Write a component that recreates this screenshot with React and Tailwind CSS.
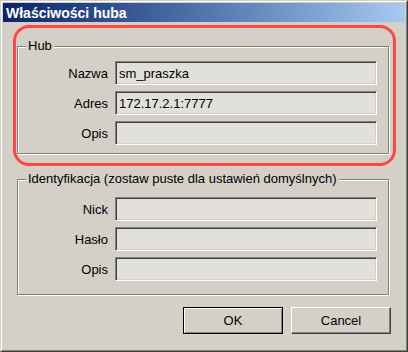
import React from "react";

// Win2000-style "Właściwości huba" dialog with a red annotation ring over the Hub group.

const FONT = { fontFamily: '"Liberation Sans", Arial, sans-serif' };

const HUB_ROWS = [
  { label: "Nazwa", value: "sm_praszka" },
  { label: "Adres", value: "172.17.2.1:7777" },
  { label: "Opis", value: "" },
];

const ID_ROWS = [
  { label: "Nick", value: "" },
  { label: "Hasło", value: "" },
  { label: "Opis", value: "" },
];

function Field({ label, value }) {
  return (
    <div className="flex items-center h-[24px]">
      <div className="w-[90px] text-right text-[13px] leading-none text-black">{label}</div>
      <div className="ml-[7px] w-[262px] h-[24px] flex items-center pl-[3px] bg-[#e2e0db] border border-t-[#808080] border-l-[#808080] border-b-white border-r-white shadow-[inset_1px_1px_0_#404040,inset_-1px_-1px_0_#d4d0c8] text-[13px] leading-none text-black">
        {value}
      </div>
    </div>
  );
}

function Group({ title, rows, className }) {
  return (
    <div
      className={
        "relative w-[372px] border border-[#808080] shadow-[inset_1px_1px_0_#fff,1px_1px_0_#fff] " +
        className
      }
    >
      <span className="absolute -top-[9px] left-[8px] px-[2px] bg-[#d4d0c8] text-[13px] leading-[16px] text-black whitespace-nowrap">
        {title}
      </span>
      <div className="flex flex-col gap-[6px]">
        {rows.map((r, i) => (
          <Field key={i} {...r} />
        ))}
      </div>
    </div>
  );
}

export default function App() {
  return (
    <div
      className="relative w-[408px] h-[352px] border border-t-[#d4d0c8] border-l-[#d4d0c8] border-b-[#404040] border-r-[#404040]"
      style={FONT}
    >
      <div className="h-full p-[1px] bg-[#d4d0c8] border border-t-white border-l-white border-b-[#808080] border-r-[#808080] flex flex-col">
        <div className="h-[19px] flex items-center pl-[3px] bg-gradient-to-r from-[#0a246a] to-[#a6caf0] text-white text-[14px] font-bold leading-none">
          Właściwości huba
        </div>

        <div className="flex flex-col pl-[14px]">
          <Group title="Hub" rows={HUB_ROWS} className="mt-[24px] h-[108px] pt-[14px]" />
          <Group
            title="Identyfikacja (zostaw puste dla ustawień domyślnych)"
            rows={ID_ROWS}
            className="mt-[25px] h-[116px] pt-[17px]"
          />
        </div>

        <div className="flex justify-end gap-[8px] pr-[14px] mt-[12px]">
          <button className="w-[100px] h-[27px] border border-black bg-[#d4d0c8] shadow-[inset_1px_1px_0_#fff,inset_-1px_-1px_0_#808080] text-[13px] text-black">
            OK
          </button>
          <button className="w-[100px] h-[27px] border border-t-white border-l-white border-b-[#404040] border-r-[#404040] bg-[#d4d0c8] shadow-[inset_-1px_-1px_0_#808080] text-[13px] text-black">
            Cancel
          </button>
        </div>
      </div>

      {/* red annotation ring */}
      <div className="absolute left-[12px] top-[24px] w-[383px] h-[141px] rounded-[16px] border-[3px] border-[#ff4646] pointer-events-none" />
    </div>
  );
}
